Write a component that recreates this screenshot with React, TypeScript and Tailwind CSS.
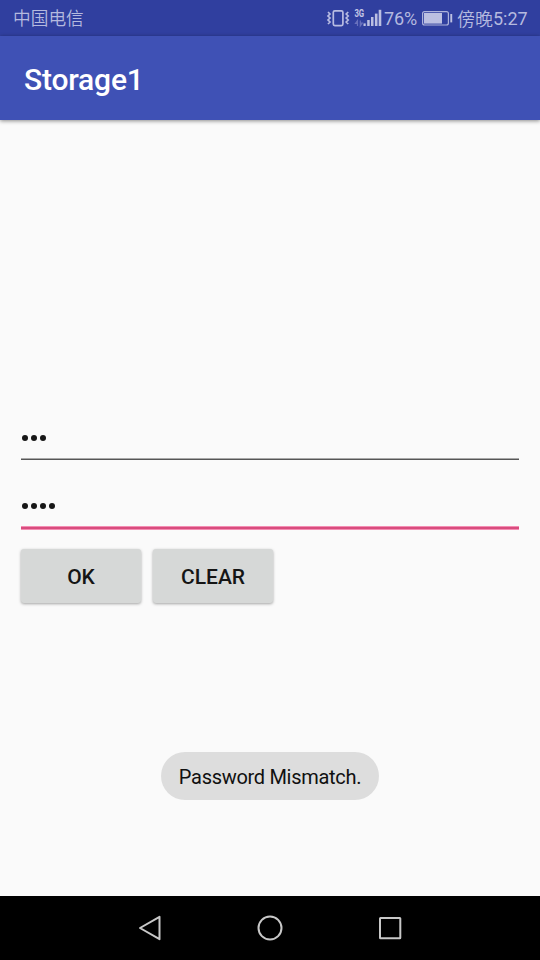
import React from 'react';

function VibrateIcon() {
  return (
    <svg className="block shrink-0" width="24" height="20" viewBox="326 8 24 20" fill="none" stroke="#b8bce2" strokeWidth="1.7">
      <rect x="333.3" y="10.8" width="9.6" height="14.8" rx="1.5" />
      <path d="M328 12l2 2-2 2 2 2-2 2 2 2-2 2M348.2 12l-2 2 2 2-2 2 2 2-2 2 2 2" />
    </svg>
  );
}

function SignalIcon() {
  return (
    <svg className="ml-1 block shrink-0" width="28" height="20" viewBox="354 8 28 20">
      <text x="354.4" y="17" fill="#c4c7e6" fontFamily="Roboto, sans-serif" fontWeight="700" fontSize="10" textLength="9.8" lengthAdjust="spacingAndGlyphs">3G</text>
      <g fill="#bcc0e2">
        <rect x="363.5" y="23.4" width="2.2" height="2.6" />
        <rect x="367.2" y="20" width="2.5" height="6" />
        <rect x="371" y="17" width="2.5" height="9" />
        <rect x="374.9" y="13.6" width="2.6" height="12.4" />
        <rect x="378.7" y="9.8" width="2.6" height="16.2" />
      </g>
      <path d="M357.5 26v-5.5l-2 2.8h2M360.3 20.5V26l2-2.8h-2" fill="none" stroke="#6971bd" strokeWidth="1.2" />
    </svg>
  );
}

function BatteryIcon() {
  return (
    <svg className="ml-1 block shrink-0" width="32" height="20" viewBox="421 8 32 20">
      <rect x="422.6" y="11.6" width="25.8" height="13.4" rx="2" fill="none" stroke="#aeb3db" strokeWidth="1.2" />
      <rect x="424" y="13" width="18" height="10.6" fill="#bcc0e2" />
      <rect x="450.3" y="14" width="1.9" height="8.4" fill="#bcc0e2" />
    </svg>
  );
}

function StatusBar() {
  return (
    <div className="flex h-9 items-center bg-[#303f9f] pl-[13px] text-[#b5badf]">
      <span className="w-[313px] pb-px text-[17.7px] leading-[35px] font-[350] font-['Noto_Sans_CJK_SC',sans-serif]">中国电信</span>
      <VibrateIcon />
      <SignalIcon />
      <span className="ml-0.5 w-[33px] pt-px text-[18px] leading-9 tracking-[-0.1px]">76%</span>
      <BatteryIcon />
      <span className="ml-1 flex items-center whitespace-nowrap pt-0.5 text-[18px] leading-[34px]">
        <span className="pb-0.5 leading-8 font-[350] font-['Noto_Sans_CJK_SC',sans-serif]">傍晚</span>
        <span>5:27</span>
      </span>
    </div>
  );
}

function PasswordDots({ count }: { count: number }) {
  return (
    <div className="flex gap-[3px] pl-px">
      {Array.from({ length: count }, (_, i) => (
        <span key={i} className="size-1.5 rounded-full bg-[#171717]" />
      ))}
    </div>
  );
}

function RaisedButton({ label }: { label: string }) {
  return (
    <button className="h-[54px] w-[120px] rounded-[3px] bg-[#d6d8d7] pt-[3px] text-[21px] font-medium text-[#151515] shadow-[0_1px_3px_rgba(0,0,0,0.35)]">
      {label}
    </button>
  );
}

export default function App() {
  return (
    <div className="flex h-[960px] w-[540px] flex-col overflow-hidden bg-[#fafafa] font-[Roboto,sans-serif]">
      <StatusBar />
      <header className="flex h-[84px] items-center bg-[#3f51b5] pt-0.5 pl-6 text-[30px] font-medium tracking-[-0.2px] text-white shadow-[0_1px_4px_rgba(0,0,0,0.45)]">
        Storage1
      </header>
      <main className="flex flex-1 flex-col px-[21px] pt-[315px]">
        <PasswordDots count={3} />
        <div className="mt-[17px] h-0.5 border-t border-[#a8a8a8] bg-[#565656]" />
        <div className="mt-[43px]">
          <PasswordDots count={4} />
        </div>
        <div className="mt-[17px] h-1 border-y border-[#f48db3] bg-[#d84c7e]" />
        <div className="mt-[19px] flex gap-3">
          <RaisedButton label="OK" />
          <RaisedButton label="CLEAR" />
        </div>
        <div className="mt-[149px] flex h-12 w-[218px] items-center justify-center self-center rounded-full bg-[#dddddd] pt-0.5 text-[20px] tracking-[-0.3px] text-[#101010]">
          Password Mismatch.
        </div>
      </main>
      <nav className="flex h-16 items-center justify-center bg-black">
        <svg width="300" height="64" viewBox="120 0 300 64" fill="none" stroke="#c8c8c8" strokeWidth="2" strokeLinejoin="round">
          <path d="M140 32L159.5 20.8V43.2Z" />
          <circle cx="270" cy="32" r="11.5" />
          <rect x="380" y="22" width="20.3" height="20.3" rx="0.5" />
        </svg>
      </nav>
    </div>
  );
}
